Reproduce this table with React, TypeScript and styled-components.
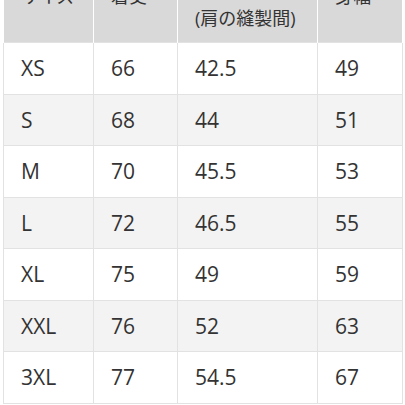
import React from "react";
import styled, { createGlobalStyle } from "styled-components";

const Global = createGlobalStyle`
  html, body {
    margin: 0;
    padding: 0;
    background: #ffffff;
    overflow: hidden;
  }
  body {
    font-family: "Open Sans", "Noto Sans CJK JP", sans-serif;
    color: #333333;
  }
`;

const Page = styled.div`
  width: 405px;
  height: 405px;
  overflow: hidden;
  padding-left: 3px;
  box-sizing: border-box;
`;

const Table = styled.table`
  width: 399px;
  margin-top: -49.5px;
  border-collapse: collapse;
  table-layout: fixed;
`;

const HeadCell = styled.th`
  background: #d9d9d9;
  color: #333333;
  font-family: "Open Sans", "Noto Sans CJK JP", sans-serif;
  font-size: 18px;
  font-weight: 400;
  line-height: 44px;
  height: 92px;
  padding: 0 0 0 17px;
  text-align: left;
  vertical-align: middle;
  border-left: 1px solid #ffffff;
  border-right: 1px solid #ffffff;
  box-sizing: border-box;
`;

const Row = styled.tr<{ $shade: boolean }>`
  height: 51.5px;
  background: ${(p) => (p.$shade ? "#f3f3f3" : "#ffffff")};
`;

const Cell = styled.td`
  font-size: 21px;
  line-height: 28px;
  padding: 0 0 0 17px;
  vertical-align: middle;
  border: 1px solid #e2e2e2;
  color: #333333;
`;

const rows: [string, string, string, string][] = [
  ["XS", "66", "42.5", "49"],
  ["S", "68", "44", "51"],
  ["M", "70", "45.5", "53"],
  ["L", "72", "46.5", "55"],
  ["XL", "75", "49", "59"],
  ["XXL", "76", "52", "63"],
  ["3XL", "77", "54.5", "67"],
];

export default function App() {
  return (
    <>
      <Global />
      <Page>
        <Table>
          <colgroup>
            <col style={{ width: 90 }} />
            <col style={{ width: 84 }} />
            <col style={{ width: 140 }} />
            <col style={{ width: 85 }} />
          </colgroup>
          <thead>
            <tr>
              <HeadCell>サイズ</HeadCell>
              <HeadCell>着丈</HeadCell>
              <HeadCell>
                肩幅
                <br />
                (肩の縫製間)
              </HeadCell>
              <HeadCell>身幅</HeadCell>
            </tr>
          </thead>
          <tbody>
            {rows.map((r, i) => (
              <Row key={r[0]} $shade={i % 2 === 1}>
                {r.map((v, j) => (
                  <Cell key={j}>{v}</Cell>
                ))}
              </Row>
            ))}
          </tbody>
        </Table>
      </Page>
    </>
  );
}
